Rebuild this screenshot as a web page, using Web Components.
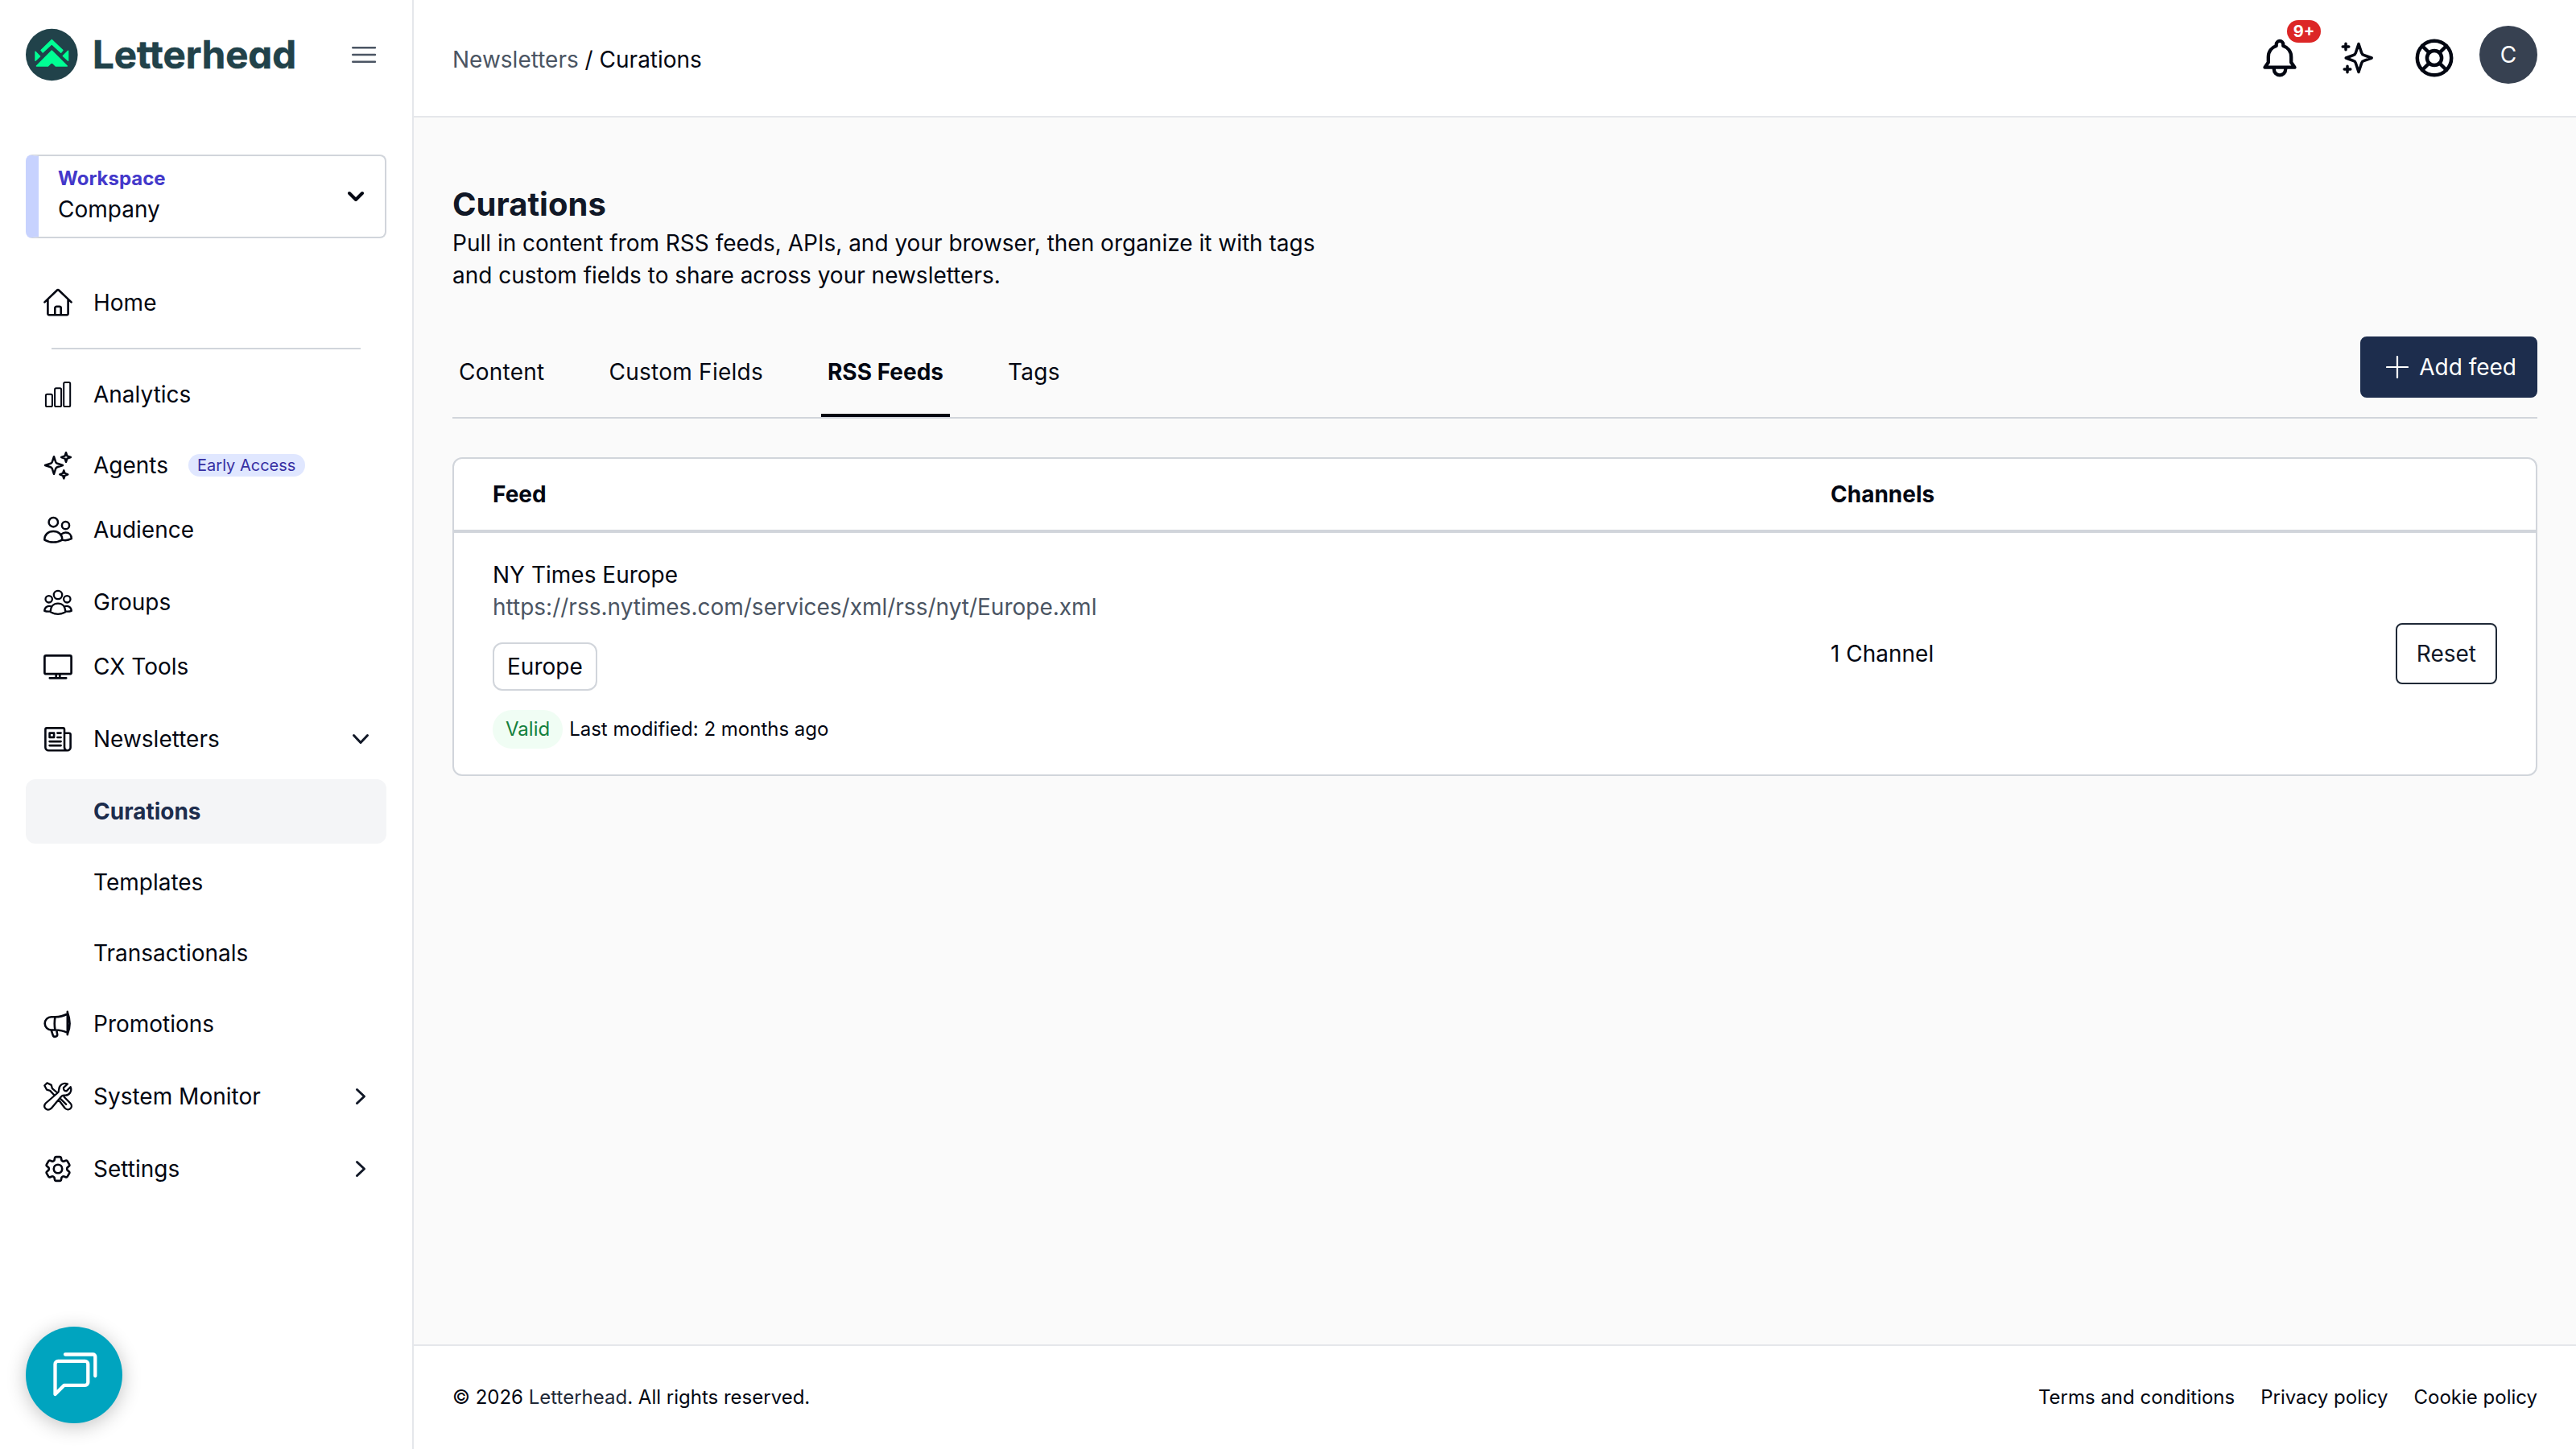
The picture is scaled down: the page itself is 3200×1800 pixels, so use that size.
<!DOCTYPE html>
<html lang="en">
<head>
<meta charset="utf-8">
<title>Curations</title>
<style>
  html, body {
    height: 100%;
    margin: 0;
  }
  body {
    --ink: #030712;
    --navy: #1d2d4d;
    --line: #d1d5db;
    --hairline: #e5e7eb;
    color: var(--ink);
    background: #fff;
    font: 400 28px/40px Inter, "Liberation Sans", sans-serif;
  }
  .url, .parent { color: #4b5563; }
  .brand { color: #1f2937; }
</style>
</head>
<body>

<template id="app-shell">
  <style>
    :host {
      display: grid;
      grid-template-columns: 514px 1fr;
      height: 100vh;
      min-height: 1800px;
    }
    .page {
      display: flex;
      flex-direction: column;
      min-width: 0;
    }
    main {
      flex: 1;
      padding: 80px 48px 0;
      background: #fafafa;
    }
  </style>
  <slot name="sidebar"></slot>
  <div class="page">
    <slot name="header"></slot>
    <main><slot></slot></main>
    <slot name="footer"></slot>
  </div>
</template>

<template id="side-bar">
  <style>
    :host {
      display: block;
      box-sizing: border-box;
      padding: 36px 32px 0;
      border-right: 2px solid var(--hairline);
    }
    .top {
      display: flex;
      justify-content: space-between;
      align-items: center;
      height: 64px;
      margin-bottom: 92px;
      padding-right: 12px;
    }
    .logo {
      display: block;
      overflow: visible;
    }
    .logo text {
      font: 700 48px Inter, sans-serif;
      font-feature-settings: "cv11";
    }
    nav { margin-top: 40px; }
  </style>
  <div class="top">
    <svg class="logo" width="350" height="64" viewBox="0 0 350 64">
      <circle cx="32.3" cy="32" r="32.3" fill="#21424a"/>
      <g fill="#00ff94" stroke="#00ff94" stroke-width="1.4" stroke-linejoin="round">
        <path d="M32.3 13.6 46 26.4 43.7 29.2 32.3 18.8 21.2 29.1 19 26.4z"/>
        <path d="M32.3 27 51.3 46H37.2L32.3 41.2 27.6 46H13.4z"/>
        <path d="M12 28.2 17.6 34 12 39.2zM52.6 27.2V39.2L46.3 33.6z"/>
      </g>
      <text x="83" y="48.8" textLength="253" lengthAdjust="spacingAndGlyphs" fill="#21424a" stroke="#21424a" stroke-width=".6">Letterhead</text>
    </svg>
    <svg width="32" height="24" viewBox="0 0 32 24" stroke="#4b5563" stroke-width="2.4" stroke-linecap="round">
      <path d="M2.2 3.2H30M2.2 12H30M2.2 20.8H30"/>
    </svg>
  </div>
  <slot name="workspace"></slot>
  <nav><slot></slot></nav>
</template>

<template id="workspace-picker">
  <style>
    :host {
      display: flex;
      justify-content: space-between;
      align-items: center;
      box-sizing: border-box;
      height: 104px;
      padding: 0 26px 4px 24px;
      border: 2px solid var(--line);
      border-left: 16px solid #c7d2fe;
      border-radius: 8px;
    }
    .label {
      color: #4338ca;
      font-size: 24px;
      font-weight: 700;
      line-height: 36px;
    }
    svg { margin-top: 4px; }
  </style>
  <div>
    <div class="label">Workspace</div>
    <slot></slot>
  </div>
  <svg width="20" height="14" viewBox="0 0 20 14" fill="none" stroke="#030712" stroke-width="4" stroke-linecap="round" stroke-linejoin="round">
    <path d="M2 3l8 8 8-8"/>
  </svg>
</template>

<template id="nav-item">
  <style>
    :host {
      display: flex;
      align-items: center;
      box-sizing: border-box;
      height: 80px;
      margin-top: 8px;
      padding: 0 20px 0 22px;
      border-radius: 12px;
    }
    :host([gap=none]) { margin-top: 0; }
    :host([gap=wide]) { margin-top: 10px; }
    :host([active]) {
      color: var(--navy);
      background: #f4f5f7;
      font-weight: 700;
    }
    ui-icon {
      width: 36px;
      height: 36px;
      margin-right: 26px;
    }
    .chevron {
      display: none;
      margin-left: auto;
      fill: none;
      stroke: #111827;
      stroke-width: 3;
      stroke-linecap: round;
      stroke-linejoin: round;
    }
    :host([chevron]) .chevron { display: block; }
    :host([chevron=down]) .chevron { transform: rotate(90deg); }
  </style>
  <ui-icon></ui-icon>
  <slot></slot>
  <svg class="chevron" width="24" height="24" viewBox="0 0 24 24"><path d="M7.5 3.5 16.5 12l-9 8.5"/></svg>
</template>

<template id="nav-divider">
  <style>
    :host {
      display: block;
      height: 2px;
      margin: 16px 32px;
      background: var(--line);
    }
  </style>
</template>

<template id="early-badge">
  <style>
    :host {
      display: block;
      margin-left: 25px;
      padding: 0 12px 0 11px;
      border-radius: 14px;
      color: #3730a3;
      background: #e0e7ff;
      font-size: 20px;
      line-height: 28px;
    }
  </style>
  <slot></slot>
</template>

<template id="top-bar">
  <style>
    :host {
      display: flex;
      justify-content: space-between;
      align-items: flex-start;
      box-sizing: border-box;
      height: 146px;
      padding: 0 48px;
      border-bottom: 2px solid var(--hairline);
    }
    .crumbs { padding-top: 54px; }
    .actions {
      display: flex;
      gap: 48px;
      padding-top: 48px;
    }
    ui-icon {
      width: 48px;
      height: 48px;
    }
    .bell { position: relative; }
    .count {
      position: absolute;
      top: -23px;
      left: 33px;
      width: 42px;
      border-radius: 14px;
      color: #fff;
      background: #dc2626;
      font-size: 20px;
      font-weight: 700;
      line-height: 28px;
      text-align: center;
    }
    .avatar {
      width: 72px;
      height: 72px;
      margin: -16px 0 0 -16px;
      border-radius: 50%;
      color: #fff;
      background: #374151;
      line-height: 72px;
      text-align: center;
    }
  </style>
  <div class="crumbs"><slot></slot></div>
  <div class="actions">
    <div class="bell"><ui-icon name="bell"></ui-icon><span class="count">9+</span></div>
    <ui-icon name="sparkle"></ui-icon>
    <ui-icon name="lifebuoy"></ui-icon>
    <div class="avatar">C</div>
  </div>
</template>

<template id="page-intro">
  <style>
    :host {
      display: block;
      width: 1090px;
    }
    h1 {
      margin: 0;
      color: #111827;
      font-size: 40px;
      font-weight: 700;
      line-height: 56px;
    }
    p { margin: 0; }
  </style>
  <h1><slot name="title"></slot></h1>
  <p><slot></slot></p>
</template>

<template id="tab-bar">
  <style>
    :host {
      display: flex;
      justify-content: space-between;
      box-sizing: border-box;
      height: 102px;
      margin-top: 56px;
      border-bottom: 2px solid var(--line);
    }
    .tabs {
      display: flex;
      gap: 64px;
    }
  </style>
  <div class="tabs"><slot></slot></div>
  <slot name="action"></slot>
</template>

<template id="tab-item">
  <style>
    :host {
      box-sizing: border-box;
      padding: 24px 8px 0;
      border-bottom: 4px solid transparent;
      letter-spacing: .009em;
      white-space: nowrap;
    }
    :host([selected]) {
      border-color: var(--ink);
      font-weight: 700;
      letter-spacing: 0;
    }
  </style>
  <slot></slot>
</template>

<template id="ui-button">
  <style>
    :host {
      display: inline-flex;
      align-items: center;
      box-sizing: border-box;
      height: 76px;
      padding: 0 24px;
      border: 2px solid #1f2937;
      border-radius: 8px;
      color: #111827;
      white-space: nowrap;
    }
    :host([primary]) {
      border-color: var(--navy);
      color: #fff;
      background: var(--navy);
    }
    svg { display: none; }
    :host([primary]) svg {
      display: block;
      margin: 0 13px 0 6px;
    }
  </style>
  <svg width="28" height="28" viewBox="0 0 28 28" stroke="currentColor" stroke-width="2.2" stroke-linecap="round">
    <path d="M14 1v26M1 14h26"/>
  </svg>
  <slot></slot>
</template>

<template id="feed-table">
  <style>
    :host {
      display: block;
      margin-top: 48px;
      border: 2px solid var(--line);
      border-radius: 12px;
      background: #fff;
    }
    .head {
      display: grid;
      grid-template-columns: 1662px 1fr;
      padding: 24px 48px;
      border-bottom: 4px solid var(--line);
      font-weight: 700;
    }
  </style>
  <div class="head"><span>Feed</span><span>Channels</span></div>
  <slot></slot>
</template>

<template id="feed-row">
  <style>
    :host {
      display: grid;
      grid-template-columns: 1662px 1fr auto;
      align-items: center;
      padding: 32px 48px;
    }
    .tags {
      display: flex;
      gap: 16px;
      margin: 24px 0;
    }
    .meta {
      display: flex;
      align-items: center;
      gap: 8px;
      font-size: 24px;
    }
  </style>
  <div>
    <slot></slot>
    <div class="tags"><slot name="tag"></slot></div>
    <div class="meta"><slot name="meta"></slot></div>
  </div>
  <slot name="channels"></slot>
  <slot name="action"></slot>
</template>

<template id="tag-chip">
  <style>
    :host {
      padding: 8px 16px;
      border: 2px solid var(--line);
      border-radius: 12px;
    }
  </style>
  <slot></slot>
</template>

<template id="status-pill">
  <style>
    :host {
      padding: 0 16px;
      border-radius: 24px;
      color: #15803d;
      background: #f0fdf4;
      line-height: 48px;
    }
  </style>
  <slot></slot>
</template>

<template id="page-footer">
  <style>
    :host {
      display: flex;
      justify-content: space-between;
      align-items: center;
      box-sizing: border-box;
      height: 130px;
      padding: 0 48px;
      border-top: 2px solid var(--hairline);
      font-size: 24px;
    }
    .links {
      display: flex;
      gap: 32px;
    }
  </style>
  <div><slot></slot></div>
  <div class="links"><slot name="link"></slot></div>
</template>

<template id="chat-button">
  <style>
    /* floats over the sidebar */
    :host {
      position: fixed;
      bottom: 32px;
      left: 32px;
      width: 120px;
      height: 120px;
      border-radius: 50%;
      background: #00a4bf;
      box-shadow: 0 4px 24px rgba(0, 0, 0, .24);
    }
    svg { display: block; }
  </style>
  <svg width="120" height="120" viewBox="0 0 120 120" fill="none" stroke="#fff" stroke-width="4.3" stroke-linecap="round" stroke-linejoin="round">
    <path d="M49 34.5h34.5a2.8 2.8 0 0 1 2.8 2.8v24"/>
    <path d="M36.5 84V46.5a3.6 3.6 0 0 1 3.6-3.6h33.6a3.6 3.6 0 0 1 3.6 3.6v22.8a3.6 3.6 0 0 1-3.6 3.6H47.5z"/>
  </svg>
</template>

<app-shell>
  <side-bar slot="sidebar">
    <workspace-picker slot="workspace">Company</workspace-picker>
    <nav-item icon="home" gap="none">Home</nav-item>
    <nav-divider></nav-divider>
    <nav-item icon="chart" gap="none">Analytics</nav-item>
    <nav-item icon="stars">Agents<early-badge>Early Access</early-badge></nav-item>
    <nav-item icon="people" gap="none">Audience</nav-item>
    <nav-item icon="group" gap="wide">Groups</nav-item>
    <nav-item icon="monitor" gap="none">CX Tools</nav-item>
    <nav-item icon="news" gap="wide" chevron="down">Newsletters</nav-item>
    <nav-item gap="wide" active>Curations</nav-item>
    <nav-item>Templates</nav-item>
    <nav-item>Transactionals</nav-item>
    <nav-item icon="megaphone">Promotions</nav-item>
    <nav-item icon="tools" gap="wide" chevron="right">System Monitor</nav-item>
    <nav-item icon="gear" gap="wide" chevron="right">Settings</nav-item>
  </side-bar>

  <top-bar slot="header"><span class="parent">Newsletters</span> / Curations</top-bar>

  <page-intro>
    <span slot="title">Curations</span>
    Pull in content from RSS feeds, APIs, and your browser, then organize it with tags and custom fields to share across your newsletters.
  </page-intro>

  <tab-bar>
    <tab-item>Content</tab-item>
    <tab-item>Custom Fields</tab-item>
    <tab-item selected>RSS Feeds</tab-item>
    <tab-item>Tags</tab-item>
    <ui-button slot="action" primary>Add feed</ui-button>
  </tab-bar>

  <feed-table>
    <feed-row>
      <div>NY Times Europe</div>
      <div class="url">https://rss.nytimes.com/services/xml/rss/nyt/Europe.xml</div>
      <tag-chip slot="tag">Europe</tag-chip>
      <status-pill slot="meta">Valid</status-pill>
      <span slot="meta">Last modified: 2 months ago</span>
      <span slot="channels">1 Channel</span>
      <ui-button slot="action">Reset</ui-button>
    </feed-row>
  </feed-table>

  <page-footer slot="footer">
    © 2026 <span class="brand">Letterhead</span>. All rights reserved.
    <span slot="link">Terms and conditions</span>
    <span slot="link">Privacy policy</span>
    <span slot="link">Cookie policy</span>
  </page-footer>
</app-shell>
<chat-button></chat-button>

<script>
  // Nav icons sit on a 36px grid, header icons on a 48px grid.
  const ICONS = {
    home: { size: 36, stroke: 2.6, body: '<path d="M1.4 17.4 16.4 3a2.3 2.3 0 0 1 3.2 0l15 14.4M5.4 14v17.8a1.5 1.5 0 0 0 1.5 1.5h22.2a1.5 1.5 0 0 0 1.5-1.5V14M14.3 33v-8.2a2 2 0 0 1 2-2h3.4a2 2 0 0 1 2 2V33"/>' },
    chart: { size: 36, stroke: 2, body: '<rect x="2.9" y="17.8" width="8" height="15.3" rx="1.6"/><rect x="14.1" y="10.3" width="8" height="22.8" rx="1.6"/><rect x="25.2" y="2.9" width="8" height="30.2" rx="1.6"/>' },
    stars: { size: 36, stroke: 2.5, body: '<path d="M13 7.2l2.2 6.6q.5 1.5 2 2L24 18l-6.8 2.2q-1.5.5-2 2L13 28.8l-2.2-6.6q-.5-1.5-2-2L2 18l6.8-2.2q1.5-.5 2-2zM28 2.2l1.4 4.2L33.8 8l-4.4 1.6L28 13.8l-1.4-4.2L22.2 8l4.4-1.6zM25.3 24.4l1.2 3.4 3.8 1.5-3.8 1.5-1.2 3.6-1.2-3.6-3.8-1.5 3.8-1.5z"/>' },
    people: { size: 36, stroke: 2.5, body: '<circle cx="12.3" cy="8.7" r="5.7"/><circle cx="27.5" cy="12.7" r="4.6"/><path d="M1.3 30.6C1.3 23.8 6 20 12.3 20s11 3.8 11 10.6c-6.4 3.9-15.6 3.9-22 0zM22.3 23.7c1.5-1.5 3.3-2.2 5.4-2.2 4.2 0 7.1 3 7.1 7.7-3.4 1.8-7.8 2.4-11.5 1.4"/>' },
    group: { size: 36, stroke: 2.3, body: '<circle cx="18" cy="9" r="5.2"/><circle cx="6.7" cy="14.3" r="4.2"/><circle cx="29.3" cy="14.3" r="4.2"/><path d="M8.8 30.2c0-6.7 3.7-10.6 9.2-10.6s9.2 3.9 9.2 10.6c-5.3 3.5-13.1 3.5-18.4 0zM10.2 23.5c-4.7-1.7-8.7.5-9 5.4 2.2.8 4.8 1 7.4.6M25.8 23.5c4.7-1.7 8.7.5 9 5.4-2.2.8-4.8 1-7.4.6"/>' },
    monitor: { size: 36, stroke: 2.7, body: '<rect x="1.4" y="4.4" width="33.2" height="22.8" rx="1.8"/><path d="M15.7 27.5v4.3M20.3 27.5v4.3M7.8 32.3h20.4"/>' },
    news: { size: 36, stroke: 2.6, body: '<path d="M26 28.5V6.2A1.8 1.8 0 0 0 24.2 4.4H4.2a1.8 1.8 0 0 0-1.8 1.8v22.2a3.9 3.9 0 0 0 3.9 3.9h23.4a3.9 3.9 0 0 0 3.9-3.9V12.6a1.8 1.8 0 0 0-1.8-1.8H26M26 28c0 2.3.7 4 3 4.3M7.6 10.6h5.5v5.3H7.6zM17.4 10.6h4.2M17.4 16h4.2M7.6 21.1h14M7.6 26.1h14"/>' },
    megaphone: { size: 36, stroke: 2.6, body: '<path d="M14.5 9.3h-4.7a8.1 8.1 0 0 0 0 16.2h4.7M29.8 2.9v28.4M14.5 9.3c5.2 0 10.3-1.2 15.3-3.8M14.5 25.5c5.2 0 10.3 1 15.3 3.4M29.8 3.5c3.2 8.4 3.6 19 0 27.2M14.5 9.3c-1 5.4-1 10.8 0 16.2M9.8 26l1.8 5.6a2.8 2.8 0 0 0 5.5-1.1l-.8-4.5"/>' },
    tools: { size: 36, stroke: 2.3, body: '<path d="M2.7 26.5 17.2 14c1.8-1.5 2-2.7 2-4.5.2-5.5 5.1-9.2 10.8-7l-5 4.7c-.4 2.4.9 4.2 3.6 4.2l5-5.2c2.4 5.4-1.8 11.2-7.6 10.4-1.9-.2-3 .3-4 1.6L9.6 32.9C4.4 37.2-1.5 31.5 2.7 26.5zM17.2 13.5l-6.3-5.4-1.2-4.2L4.5 1.3 1.3 4.5l2.8 5.2 4.1 1.2 5.5 5.9M18.8 22.2l7.8 10.3c4.8 5 11.2-1.2 6.8-6L25.5 18.5M20.8 20.5l7.4 7.4"/>' },
    gear: { size: 36, stroke: 1.6, body: '<g transform="translate(18 18) scale(1.66) translate(-12 -12)"><path d="M9.594 3.94c.09-.542.56-.94 1.11-.94h2.593c.55 0 1.02.398 1.11.94l.213 1.281c.063.374.313.686.645.87.074.04.147.083.22.127.325.196.72.257 1.075.124l1.217-.456a1.125 1.125 0 0 1 1.37.49l1.296 2.247a1.125 1.125 0 0 1-.26 1.431l-1.003.827c-.293.241-.438.613-.43.992a7.723 7.723 0 0 1 0 .255c-.008.378.137.75.43.991l1.004.827c.424.35.534.955.26 1.43l-1.298 2.247a1.125 1.125 0 0 1-1.369.491l-1.217-.456c-.355-.133-.75-.072-1.076.124a6.47 6.47 0 0 1-.22.128c-.331.183-.581.495-.644.869l-.213 1.281c-.09.543-.56.94-1.11.94h-2.594c-.55 0-1.019-.398-1.11-.94l-.213-1.281c-.062-.374-.312-.686-.644-.87a6.52 6.52 0 0 1-.22-.127c-.325-.196-.72-.257-1.076-.124l-1.217.456a1.125 1.125 0 0 1-1.369-.49l-1.297-2.247a1.125 1.125 0 0 1 .26-1.431l1.004-.827c.292-.24.437-.613.43-.991a6.932 6.932 0 0 1 0-.255c.007-.38-.138-.751-.43-.992l-1.004-.827a1.125 1.125 0 0 1-.26-1.43l1.297-2.247a1.125 1.125 0 0 1 1.37-.491l1.216.456c.356.133.751.072 1.076-.124.072-.044.146-.086.22-.128.332-.183.582-.495.644-.869z"/><circle cx="12" cy="12" r="3.15"/></g>' },
    bell: { size: 48, stroke: 4.3, body: '<path d="M19.7 9V7.2a4.3 4.3 0 0 1 8.6 0V9C34 10.8 38.2 16 38.2 23v6.5l4.3 6.2h-37l4.3-6.2V23C9.8 16 14 10.8 19.7 9z"/><path d="M16.8 36.5v1.6a7.2 7.2 0 0 0 14.4 0v-1.6"/>' },
    sparkle: { size: 48, stroke: 3.5, body: '<path d="M26 6.5l3.7 11.3q.6 1.9 2.5 2.5L42.2 24l-10 3.7q-1.9.6-2.5 2.5L26 41.5l-3.7-11.3q-.6-1.9-2.5-2.5L10.2 24l9.6-3.7q1.9-.6 2.5-2.5zM10 6.2v7.6M6.2 10h7.6M12 34.2v7.6M8.2 38h7.6"/>' },
    lifebuoy: { size: 48, stroke: 4.5, body: '<circle cx="24" cy="24" r="21.2"/><circle cx="24" cy="24" r="9.1"/><path d="M30.5 17.5 39 9M17.5 17.5 9 9M30.5 30.5 39 39M17.5 30.5 9 39"/>' }
  }

  /** Draws one of ICONS; an unknown name leaves an empty box. */
  class UiIcon extends HTMLElement {
    static get observedAttributes() { return ['name'] }

    constructor() {
      super()
      this.attachShadow({ mode: 'open' })
    }

    attributeChangedCallback() {
      const icon = ICONS[this.getAttribute('name')]
      if (!icon) { return }
      this.shadowRoot.innerHTML = `
        <style>
          :host { display: block; flex: none; }
          svg {
            display: block;
            overflow: visible;
            fill: none;
            stroke: var(--ink);
            stroke-linecap: round;
            stroke-linejoin: round;
          }
        </style>
        <svg width="100%" height="100%" viewBox="0 0 ${icon.size} ${icon.size}" stroke-width="${icon.stroke}">${icon.body}</svg>`
    }
  }
  customElements.define('ui-icon', UiIcon)

  /** Clones the template whose id is the element's own tag name. */
  class TemplateElement extends HTMLElement {
    constructor() {
      super()
      const template = document.getElementById(this.localName)
      this.attachShadow({ mode: 'open' }).appendChild(document.importNode(template.content, true))
    }
  }

  class NavItem extends TemplateElement {
    connectedCallback() {
      const icon = this.shadowRoot.querySelector('ui-icon')
      icon.setAttribute('name', this.getAttribute('icon') || '')
    }
  }
  customElements.define('nav-item', NavItem)

  const plain = ['app-shell', 'side-bar', 'workspace-picker', 'nav-divider', 'early-badge', 'top-bar',
    'page-intro', 'tab-bar', 'tab-item', 'ui-button', 'feed-table', 'feed-row', 'tag-chip',
    'status-pill', 'page-footer', 'chat-button']
  plain.forEach(tag => customElements.define(tag, class extends TemplateElement {}))
</script>
</body>
</html>
